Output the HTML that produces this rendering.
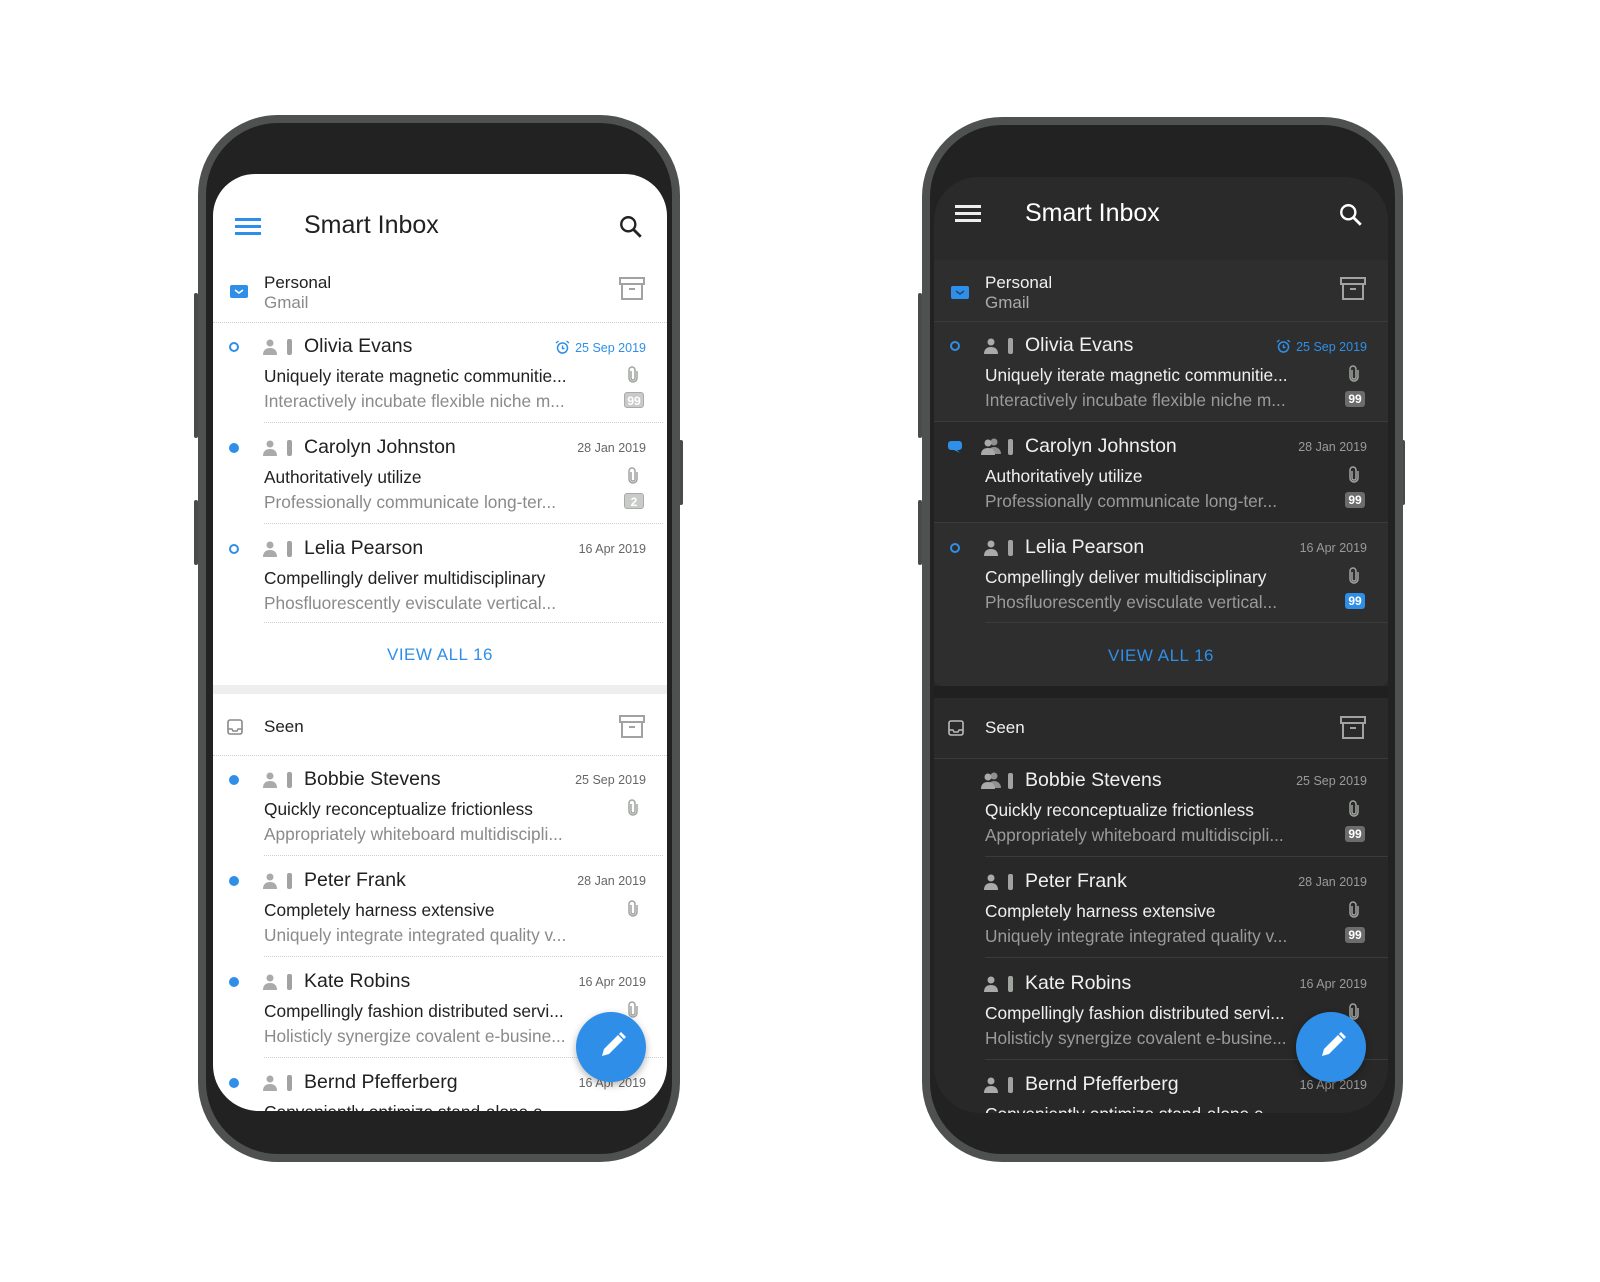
<!DOCTYPE html>
<html><head><meta charset="utf-8">
<style>
*{margin:0;padding:0;box-sizing:border-box}
body{width:1600px;height:1282px;background:#fff;position:relative;overflow:hidden;font-family:"Liberation Sans",Arial,sans-serif}
.frame{position:absolute;border-radius:80px;background:#222;border:8px solid #4f5150}
.btn{position:absolute;width:4px;background:#4a4a4a;border-radius:2px}
.screen{position:absolute;width:454px;overflow:hidden}
.light{background:#fff;color:#212121}
.dark{background:#282828;color:#f0f0f0}
.a{position:absolute;white-space:nowrap}
.title{font-size:25px;left:91px}
.sec{font-size:17px;left:51px}
.name{font-size:19.5px;left:91px}
.subj{font-size:17.3px;left:51px}
.prev{font-size:17.3px;left:51px}
.light .prev{color:#8a8a8a}
.dark .prev{color:#9a9a9a}
.date{font-size:12.5px;right:21px}
.light .date{color:#666}
.dark .date{color:#9a9a9a}
.blue{color:#2f8fe8!important}
.div{position:absolute;left:51px;right:4px;height:1px}
.light .div{border-top:1px dotted #cfcfcf}
.dark .div{background:#3b3b3b}
.badge{position:absolute;right:23px;width:20px;height:16px;border-radius:3px;font-size:12px;font-weight:bold;text-align:center;line-height:16px}
.light .badge{background:#c9cbc9;color:#fff;border:1px solid #a9aba9}
.dark .badge{background:#6c6c6c;color:#fff}
.badge.b{background:#2f8fe8!important}
.bar{position:absolute;left:74px;width:5px;height:16px;border-radius:2px;background:#a0a3a0}
.view{position:absolute;left:0;right:0;text-align:center;font-size:17px;color:#2f8fe8;letter-spacing:0.5px}
.fab{position:absolute;width:70px;height:70px;border-radius:50%;background:#2f8fe8;box-shadow:0 3px 8px rgba(0,0,0,.3)}
.row{position:absolute;left:0;right:0;height:101px}
.clip{left:415px;top:44px}
</style></head><body>

<!-- LIGHT PHONE -->
<div class="btn" style="left:194px;top:293px;height:145px"></div>
<div class="btn" style="left:194px;top:500px;height:65px"></div>
<div class="btn" style="left:679px;top:440px;height:65px"></div>
<div class="frame" style="left:198px;top:115px;width:482px;height:1047px"></div>
<div class="screen light" style="left:213px;top:174px;height:937px;border-radius:42px 42px 46px 46px">
  <svg class="a" style="left:22px;top:43px" width="27" height="18"><rect y="1" width="26" height="3" fill="#2f8fe8"/><rect y="8" width="26" height="3" fill="#2f8fe8"/><rect y="15" width="26" height="3" fill="#2f8fe8"/></svg>
  <div class="a title" style="top:37px">Smart Inbox</div>
  <svg class="a" style="left:405px;top:40px" width="26" height="26" viewBox="0 0 24 24"><circle cx="9.5" cy="9.5" r="6.5" fill="none" stroke="#222" stroke-width="2.2"/><path d="M14.5 14.5L21 21" stroke="#222" stroke-width="2.6"/></svg>
  <svg class="a" style="left:17px;top:111px" width="19" height="14"><rect width="18" height="13" rx="2" fill="#2f8fe8"/><path d="M5 5l4 3 4-3" stroke="#fff" stroke-width="1.6" fill="none"/></svg>
  <div class="a sec" style="top:99px">Personal</div>
  <div class="a sec" style="top:119px;color:#8a8a8a">Gmail</div>
  <svg class="a" style="left:406px;top:103px" width="26" height="24"><rect x="1" y="1" width="24" height="6" fill="none" stroke="#a0a3a0" stroke-width="2"/><rect x="3" y="7" width="20" height="15" fill="none" stroke="#a0a3a0" stroke-width="2"/><rect x="10" y="11" width="6" height="2" fill="#a0a3a0"/></svg>
  <div class="div" style="left:0;right:0;top:148px"></div>

  <div class="row" style="top:148px">
    <svg class="a" style="left:15px;top:19px" width="12" height="12"><circle cx="6" cy="6" r="4" fill="none" stroke="#2f8fe8" stroke-width="2"/></svg>
    <svg class="a" style="left:48px;top:16px" width="18" height="18"><circle cx="9" cy="5" r="3.5" fill="#a9aba9"/><path d="M2 17c0-5 3-7 7-7s7 2 7 7z" fill="#a9aba9"/></svg>
    <div class="bar" style="top:17px"></div>
    <div class="a name" style="top:13px">Olivia Evans</div>
    <div class="a date blue" style="top:18px"><svg width="15" height="14" viewBox="0 0 15 14" style="vertical-align:-2px;margin-right:5px"><circle cx="7.5" cy="8" r="5" fill="none" stroke="#2f8fe8" stroke-width="1.5"/><path d="M7.5 5.5v3h2" stroke="#2f8fe8" stroke-width="1.4" fill="none"/><path d="M1 3l2.5-2M14 3l-2.5-2" stroke="#2f8fe8" stroke-width="1.4"/></svg>25 Sep 2019</div>
    <div class="a subj" style="top:44px">Uniquely iterate magnetic communitie...</div>
    <svg class="a clip" width="10" height="17"><path d="M3 5v7a2 2 0 004 0V4a3 3 0 00-6 0v8a4 4 0 008 0V5" fill="none" stroke="#a0a3a0" stroke-width="1.5"/></svg>
    <div class="a prev" style="top:69px">Interactively incubate flexible niche m...</div>
    <div class="badge" style="top:70px">99</div>
    <div class="div" style="top:100px"></div>
  </div>
  <div class="row" style="top:249px">
    <svg class="a" style="left:15px;top:19px" width="12" height="12"><circle cx="6" cy="6" r="5" fill="#2f8fe8"/></svg>
    <svg class="a" style="left:48px;top:16px" width="18" height="18"><circle cx="9" cy="5" r="3.5" fill="#a9aba9"/><path d="M2 17c0-5 3-7 7-7s7 2 7 7z" fill="#a9aba9"/></svg>
    <div class="bar" style="top:17px"></div>
    <div class="a name" style="top:13px">Carolyn Johnston</div>
    <div class="a date" style="top:18px">28 Jan 2019</div>
    <div class="a subj" style="top:44px">Authoritatively utilize</div>
    <svg class="a clip" width="10" height="17"><path d="M3 5v7a2 2 0 004 0V4a3 3 0 00-6 0v8a4 4 0 008 0V5" fill="none" stroke="#a0a3a0" stroke-width="1.5"/></svg>
    <div class="a prev" style="top:69px">Professionally communicate long-ter...</div>
    <div class="badge" style="top:70px">2</div>
    <div class="div" style="top:100px"></div>
  </div>
  <div class="row" style="top:350px">
    <svg class="a" style="left:15px;top:19px" width="12" height="12"><circle cx="6" cy="6" r="4" fill="none" stroke="#2f8fe8" stroke-width="2"/></svg>
    <svg class="a" style="left:48px;top:16px" width="18" height="18"><circle cx="9" cy="5" r="3.5" fill="#a9aba9"/><path d="M2 17c0-5 3-7 7-7s7 2 7 7z" fill="#a9aba9"/></svg>
    <div class="bar" style="top:17px"></div>
    <div class="a name" style="top:13px">Lelia Pearson</div>
    <div class="a date" style="top:18px">16 Apr 2019</div>
    <div class="a subj" style="top:44px">Compellingly deliver multidisciplinary</div>
    <div class="a prev" style="top:69px">Phosfluorescently evisculate vertical...</div>
    <div class="div" style="top:98px"></div>
  </div>
  <div class="view" style="top:471px">VIEW ALL 16</div>
  <div style="position:absolute;left:0;right:0;top:511px;height:9px;background:#eeeeee"></div>
  <svg class="a" style="left:14px;top:545px" width="16" height="16"><rect x="1" y="1" width="14" height="14" rx="2" fill="none" stroke="#888" stroke-width="1.6"/><path d="M1 10h4l1 2h4l1-2h4" fill="none" stroke="#888" stroke-width="1.4"/></svg>
  <div class="a sec" style="top:543px">Seen</div>
  <svg class="a" style="left:406px;top:541px" width="26" height="24"><rect x="1" y="1" width="24" height="6" fill="none" stroke="#a0a3a0" stroke-width="2"/><rect x="3" y="7" width="20" height="15" fill="none" stroke="#a0a3a0" stroke-width="2"/><rect x="10" y="11" width="6" height="2" fill="#a0a3a0"/></svg>
  <div class="div" style="left:0;right:0;top:581px"></div>

  <div class="row" style="top:581px">
    <svg class="a" style="left:15px;top:19px" width="12" height="12"><circle cx="6" cy="6" r="5" fill="#2f8fe8"/></svg>
    <svg class="a" style="left:48px;top:16px" width="18" height="18"><circle cx="9" cy="5" r="3.5" fill="#a9aba9"/><path d="M2 17c0-5 3-7 7-7s7 2 7 7z" fill="#a9aba9"/></svg>
    <div class="bar" style="top:17px"></div>
    <div class="a name" style="top:13px">Bobbie Stevens</div>
    <div class="a date" style="top:18px">25 Sep 2019</div>
    <div class="a subj" style="top:44px">Quickly reconceptualize frictionless</div>
    <svg class="a clip" width="10" height="17"><path d="M3 5v7a2 2 0 004 0V4a3 3 0 00-6 0v8a4 4 0 008 0V5" fill="none" stroke="#a0a3a0" stroke-width="1.5"/></svg>
    <div class="a prev" style="top:69px">Appropriately whiteboard multidiscipli...</div>
    <div class="div" style="top:100px"></div>
  </div>
  <div class="row" style="top:682px">
    <svg class="a" style="left:15px;top:19px" width="12" height="12"><circle cx="6" cy="6" r="5" fill="#2f8fe8"/></svg>
    <svg class="a" style="left:48px;top:16px" width="18" height="18"><circle cx="9" cy="5" r="3.5" fill="#a9aba9"/><path d="M2 17c0-5 3-7 7-7s7 2 7 7z" fill="#a9aba9"/></svg>
    <div class="bar" style="top:17px"></div>
    <div class="a name" style="top:13px">Peter Frank</div>
    <div class="a date" style="top:18px">28 Jan 2019</div>
    <div class="a subj" style="top:44px">Completely harness extensive</div>
    <svg class="a clip" width="10" height="17"><path d="M3 5v7a2 2 0 004 0V4a3 3 0 00-6 0v8a4 4 0 008 0V5" fill="none" stroke="#a0a3a0" stroke-width="1.5"/></svg>
    <div class="a prev" style="top:69px">Uniquely integrate integrated quality v...</div>
    <div class="div" style="top:100px"></div>
  </div>
  <div class="row" style="top:783px">
    <svg class="a" style="left:15px;top:19px" width="12" height="12"><circle cx="6" cy="6" r="5" fill="#2f8fe8"/></svg>
    <svg class="a" style="left:48px;top:16px" width="18" height="18"><circle cx="9" cy="5" r="3.5" fill="#a9aba9"/><path d="M2 17c0-5 3-7 7-7s7 2 7 7z" fill="#a9aba9"/></svg>
    <div class="bar" style="top:17px"></div>
    <div class="a name" style="top:13px">Kate Robins</div>
    <div class="a date" style="top:18px">16 Apr 2019</div>
    <div class="a subj" style="top:44px">Compellingly fashion distributed servi...</div>
    <svg class="a clip" width="10" height="17"><path d="M3 5v7a2 2 0 004 0V4a3 3 0 00-6 0v8a4 4 0 008 0V5" fill="none" stroke="#a0a3a0" stroke-width="1.5"/></svg>
    <div class="a prev" style="top:69px">Holisticly synergize covalent e-busine...</div>
    <div class="div" style="top:100px"></div>
  </div>
  <div class="row" style="top:884px">
    <svg class="a" style="left:15px;top:19px" width="12" height="12"><circle cx="6" cy="6" r="5" fill="#2f8fe8"/></svg>
    <svg class="a" style="left:48px;top:16px" width="18" height="18"><circle cx="9" cy="5" r="3.5" fill="#a9aba9"/><path d="M2 17c0-5 3-7 7-7s7 2 7 7z" fill="#a9aba9"/></svg>
    <div class="bar" style="top:17px"></div>
    <div class="a name" style="top:13px">Bernd Pfefferberg</div>
    <div class="a date" style="top:18px">16 Apr 2019</div>
    <div class="a subj" style="top:44px">Conveniently optimize stand-alone e...</div>
  </div>
  <div class="fab" style="left:363px;top:838px"><svg width="70" height="70"><path d="M26 44l2-7 14-14 5 5-14 14z" fill="#fff"/><path d="M43 22l2-2 5 5-2 2z" fill="#fff"/></svg></div>
</div>

<!-- DARK PHONE -->
<div class="btn" style="left:918px;top:293px;height:145px"></div>
<div class="btn" style="left:918px;top:500px;height:65px"></div>
<div class="btn" style="left:1401px;top:440px;height:65px"></div>
<div class="frame" style="left:922px;top:117px;width:481px;height:1045px"></div>
<div class="screen dark" style="left:934px;top:177px;height:936px;border-radius:44px 44px 46px 46px">
  <div style="position:absolute;left:0;right:0;top:0;height:83px;background:#2a2a2a"></div>
  <svg class="a" style="left:21px;top:27px" width="27" height="18"><rect y="1" width="26" height="3" fill="#eee"/><rect y="8" width="26" height="3" fill="#eee"/><rect y="15" width="26" height="3" fill="#eee"/></svg>
  <div class="a title" style="top:22px;color:#fff">Smart Inbox</div>
  <svg class="a" style="left:404px;top:25px" width="26" height="26" viewBox="0 0 24 24"><circle cx="9.5" cy="9.5" r="6.5" fill="none" stroke="#fff" stroke-width="2.2"/><path d="M14.5 14.5L21 21" stroke="#fff" stroke-width="2.6"/></svg>
  <div style="position:absolute;left:0;right:0;top:83px;height:426px;background:#2e2e2e;border-radius:0 0 8px 8px"></div>
  <svg class="a" style="left:17px;top:109px" width="19" height="14"><rect width="18" height="13" rx="2" fill="#2f8fe8"/><path d="M5 5l4 3 4-3" stroke="#1a4a80" stroke-width="1.6" fill="none"/></svg>
  <div class="a sec" style="top:96px">Personal</div>
  <div class="a sec" style="top:116px;color:#aaa">Gmail</div>
  <svg class="a" style="left:406px;top:100px" width="26" height="24"><rect x="1" y="1" width="24" height="6" fill="none" stroke="#a0a3a0" stroke-width="2"/><rect x="3" y="7" width="20" height="15" fill="none" stroke="#a0a3a0" stroke-width="2"/><rect x="10" y="11" width="6" height="2" fill="#a0a3a0"/></svg>
  <div style="position:absolute;left:0;right:0;top:144px;height:1px;background:#3b3b3b"></div>

  <div class="row" style="top:144px">
    <svg class="a" style="left:15px;top:19px" width="12" height="12"><circle cx="6" cy="6" r="4" fill="none" stroke="#2f8fe8" stroke-width="2"/></svg>
    <svg class="a" style="left:48px;top:16px" width="18" height="18"><circle cx="9" cy="5" r="3.5" fill="#a9aba9"/><path d="M2 17c0-5 3-7 7-7s7 2 7 7z" fill="#a9aba9"/></svg>
    <div class="bar" style="top:17px"></div>
    <div class="a name" style="top:13px">Olivia Evans</div>
    <div class="a date blue" style="top:18px"><svg width="15" height="14" viewBox="0 0 15 14" style="vertical-align:-2px;margin-right:5px"><circle cx="7.5" cy="8" r="5" fill="none" stroke="#2f8fe8" stroke-width="1.5"/><path d="M7.5 5.5v3h2" stroke="#2f8fe8" stroke-width="1.4" fill="none"/><path d="M1 3l2.5-2M14 3l-2.5-2" stroke="#2f8fe8" stroke-width="1.4"/></svg>25 Sep 2019</div>
    <div class="a subj" style="top:44px">Uniquely iterate magnetic communitie...</div>
    <svg class="a clip" width="10" height="17"><path d="M3 5v7a2 2 0 004 0V4a3 3 0 00-6 0v8a4 4 0 008 0V5" fill="none" stroke="#a0a3a0" stroke-width="1.5"/></svg>
    <div class="a prev" style="top:69px">Interactively incubate flexible niche m...</div>
    <div class="badge" style="top:70px">99</div>
    <div class="div" style="left:0;right:0;top:100px"></div>
  </div>
  <div class="row" style="top:245px;background:#292929">
    <svg class="a" style="left:14px;top:18px" width="14" height="14"><path d="M3 1h8a3 3 0 013 3v3a3 3 0 01-3 3H9l3 3-6-3H3a3 3 0 01-3-3V4a3 3 0 013-3z" fill="#2f8fe8"/></svg>
    <svg class="a" style="left:46px;top:15px" width="22" height="19"><circle cx="14" cy="5" r="3.5" fill="#8e918e"/><path d="M8 17c0-5 3-7 6-7s7 2 7 7z" fill="#8e918e"/><circle cx="8" cy="6" r="3.5" fill="#a9aba9"/><path d="M1 18c0-5 3-7 7-7s7 2 7 7z" fill="#a9aba9"/></svg>
    <div class="bar" style="top:17px"></div>
    <div class="a name" style="top:13px">Carolyn Johnston</div>
    <div class="a date" style="top:18px">28 Jan 2019</div>
    <div class="a subj" style="top:44px">Authoritatively utilize</div>
    <svg class="a clip" width="10" height="17"><path d="M3 5v7a2 2 0 004 0V4a3 3 0 00-6 0v8a4 4 0 008 0V5" fill="none" stroke="#a0a3a0" stroke-width="1.5"/></svg>
    <div class="a prev" style="top:69px">Professionally communicate long-ter...</div>
    <div class="badge" style="top:70px">99</div>
    <div class="div" style="left:0;right:0;top:100px"></div>
  </div>
  <div class="row" style="top:346px">
    <svg class="a" style="left:15px;top:19px" width="12" height="12"><circle cx="6" cy="6" r="4" fill="none" stroke="#2f8fe8" stroke-width="2"/></svg>
    <svg class="a" style="left:48px;top:16px" width="18" height="18"><circle cx="9" cy="5" r="3.5" fill="#a9aba9"/><path d="M2 17c0-5 3-7 7-7s7 2 7 7z" fill="#a9aba9"/></svg>
    <div class="bar" style="top:17px"></div>
    <div class="a name" style="top:13px">Lelia Pearson</div>
    <div class="a date" style="top:18px">16 Apr 2019</div>
    <div class="a subj" style="top:44px">Compellingly deliver multidisciplinary</div>
    <svg class="a clip" width="10" height="17"><path d="M3 5v7a2 2 0 004 0V4a3 3 0 00-6 0v8a4 4 0 008 0V5" fill="none" stroke="#a0a3a0" stroke-width="1.5"/></svg>
    <div class="a prev" style="top:69px">Phosfluorescently evisculate vertical...</div>
    <div class="badge b" style="top:70px">99</div>
    <div class="div" style="left:51px;right:0;top:99px"></div>
  </div>
  <div class="view" style="top:469px">VIEW ALL 16</div>
  <div style="position:absolute;left:0;right:0;top:509px;height:12px;background:#202020"></div>
  <div style="position:absolute;left:0;right:0;top:521px;height:60px;background:#2a2a2a"></div>
  <svg class="a" style="left:14px;top:543px" width="16" height="16"><rect x="1" y="1" width="14" height="14" rx="2" fill="none" stroke="#bbb" stroke-width="1.6"/><path d="M1 10h4l1 2h4l1-2h4" fill="none" stroke="#bbb" stroke-width="1.4"/></svg>
  <div class="a sec" style="top:541px">Seen</div>
  <svg class="a" style="left:406px;top:539px" width="26" height="24"><rect x="1" y="1" width="24" height="6" fill="none" stroke="#a0a3a0" stroke-width="2"/><rect x="3" y="7" width="20" height="15" fill="none" stroke="#a0a3a0" stroke-width="2"/><rect x="10" y="11" width="6" height="2" fill="#a0a3a0"/></svg>
  <div style="position:absolute;left:0;right:0;top:581px;height:1px;background:#3b3b3b"></div>

  <div class="row" style="top:579px">
    <svg class="a" style="left:46px;top:15px" width="22" height="19"><circle cx="14" cy="5" r="3.5" fill="#8e918e"/><path d="M8 17c0-5 3-7 6-7s7 2 7 7z" fill="#8e918e"/><circle cx="8" cy="6" r="3.5" fill="#a9aba9"/><path d="M1 18c0-5 3-7 7-7s7 2 7 7z" fill="#a9aba9"/></svg>
    <div class="bar" style="top:17px"></div>
    <div class="a name" style="top:13px">Bobbie Stevens</div>
    <div class="a date" style="top:18px">25 Sep 2019</div>
    <div class="a subj" style="top:44px">Quickly reconceptualize frictionless</div>
    <svg class="a clip" width="10" height="17"><path d="M3 5v7a2 2 0 004 0V4a3 3 0 00-6 0v8a4 4 0 008 0V5" fill="none" stroke="#a0a3a0" stroke-width="1.5"/></svg>
    <div class="a prev" style="top:69px">Appropriately whiteboard multidiscipli...</div>
    <div class="badge" style="top:70px">99</div>
    <div class="div" style="left:51px;right:0;top:100px"></div>
  </div>
  <div class="row" style="top:680px">
    <svg class="a" style="left:48px;top:16px" width="18" height="18"><circle cx="9" cy="5" r="3.5" fill="#a9aba9"/><path d="M2 17c0-5 3-7 7-7s7 2 7 7z" fill="#a9aba9"/></svg>
    <div class="bar" style="top:17px"></div>
    <div class="a name" style="top:13px">Peter Frank</div>
    <div class="a date" style="top:18px">28 Jan 2019</div>
    <div class="a subj" style="top:44px">Completely harness extensive</div>
    <svg class="a clip" width="10" height="17"><path d="M3 5v7a2 2 0 004 0V4a3 3 0 00-6 0v8a4 4 0 008 0V5" fill="none" stroke="#a0a3a0" stroke-width="1.5"/></svg>
    <div class="a prev" style="top:69px">Uniquely integrate integrated quality v...</div>
    <div class="badge" style="top:70px">99</div>
    <div class="div" style="left:51px;right:0;top:100px"></div>
  </div>
  <div class="row" style="top:782px">
    <svg class="a" style="left:48px;top:16px" width="18" height="18"><circle cx="9" cy="5" r="3.5" fill="#a9aba9"/><path d="M2 17c0-5 3-7 7-7s7 2 7 7z" fill="#a9aba9"/></svg>
    <div class="bar" style="top:17px"></div>
    <div class="a name" style="top:13px">Kate Robins</div>
    <div class="a date" style="top:18px">16 Apr 2019</div>
    <div class="a subj" style="top:44px">Compellingly fashion distributed servi...</div>
    <svg class="a clip" width="10" height="17"><path d="M3 5v7a2 2 0 004 0V4a3 3 0 00-6 0v8a4 4 0 008 0V5" fill="none" stroke="#a0a3a0" stroke-width="1.5"/></svg>
    <div class="a prev" style="top:69px">Holisticly synergize covalent e-busine...</div>
    <div class="div" style="left:51px;right:0;top:100px"></div>
  </div>
  <div class="row" style="top:883px">
    <svg class="a" style="left:48px;top:16px" width="18" height="18"><circle cx="9" cy="5" r="3.5" fill="#a9aba9"/><path d="M2 17c0-5 3-7 7-7s7 2 7 7z" fill="#a9aba9"/></svg>
    <div class="bar" style="top:17px"></div>
    <div class="a name" style="top:13px">Bernd Pfefferberg</div>
    <div class="a date" style="top:18px">16 Apr 2019</div>
    <div class="a subj" style="top:44px">Conveniently optimize stand-alone e...</div>
  </div>
  <div class="fab" style="left:362px;top:835px"><svg width="70" height="70"><path d="M26 44l2-7 14-14 5 5-14 14z" fill="#fff"/><path d="M43 22l2-2 5 5-2 2z" fill="#fff"/></svg></div>
</div>

</body></html>
